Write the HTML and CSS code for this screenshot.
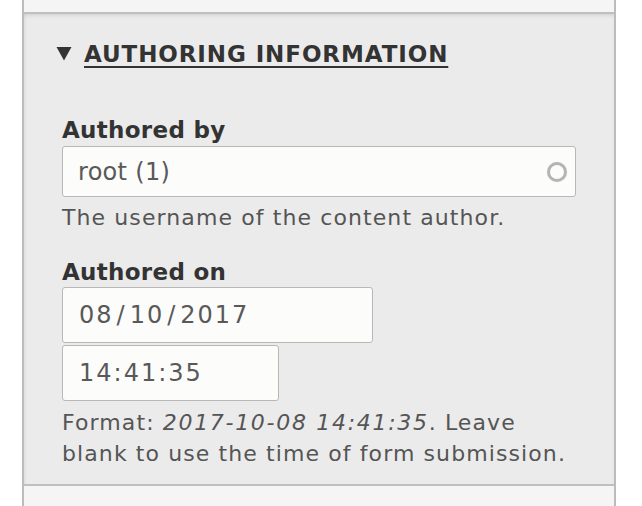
FILE: index.html
```html
<!DOCTYPE html>
<html>
<head>
<meta charset="utf-8">
<link rel="stylesheet" href="styles.css">
</head>
<body>
<div class="frame">
  <div class="prev"></div>
  <div class="details">
    <div class="summary">
      <svg class="arrow" width="16" height="15" viewBox="0 0 16 15"><polygon points="0.5,1 15.5,1 8,14.5" fill="#333"/></svg>
      <span class="summary-text">AUTHORING INFORMATION</span>
    </div>
    <div class="field">
      <div class="label">Authored by</div>
      <div class="input input-wide">
        <span>root (1)</span>
        <span class="throbber"></span>
      </div>
      <div class="desc">The username of the content author.</div>
    </div>
    <div class="field field-on">
      <div class="label">Authored on</div>
      <div class="input input-date"><span>08<span class="sep">/</span>10<span class="sep">/</span>2017</span></div>
      <div class="input input-time"><span>14:41:35</span></div>
      <div class="desc desc-format">Format: <em>2017-10-08 14:41:35</em>. Leave<br>blank to use the time of form submission.</div>
    </div>
  </div>
  <div class="next"></div>
</div>
</body>
</html>
```
FILE: styles.css
```css
html, body {
  margin: 0;
  padding: 0;
  background: #ffffff;
  height: 506px;
  overflow: hidden;
}
body {
  font-family: "DejaVu Sans", "Liberation Sans", sans-serif;
  color: #333;
}
.frame {
  margin-left: 22px;
  width: 590px;
  border-left: 2px solid #bcbcbc;
  border-right: 2px solid #bcbcbc;
}
.prev {
  height: 12px;
  background: #f5f5f5;
  border-bottom: 2px solid #bfbfbf;
}
.details {
  background: #ebebeb;
  box-shadow: inset 0 3px 4px -2px rgba(0,0,0,0.12), inset 3px 0 4px -3px rgba(0,0,0,0.08);
  padding: 25px 0 0 38px;
  height: 470px;
  box-sizing: border-box;
}
.summary {
  display: flex;
  align-items: center;
  height: 30px;
  line-height: 30px;
  font-size: 23px;
  font-weight: bold;
  color: #333;
}
.arrow {
  margin-left: -6px;
  margin-right: 12px;
  margin-top: -1px;
}
.summary-text {
  text-decoration: underline;
  text-underline-offset: 4px;
  text-decoration-thickness: 2px;
  letter-spacing: 0.9px;
}
.field {
  margin-top: 46px;
}
.field-on {
  margin-top: 24px;
}
.label {
  font-weight: bold;
  font-size: 23px;
  line-height: 30px;
  letter-spacing: 0.3px;
  color: #333;
}
.input {
  box-sizing: border-box;
  border: 1.5px solid #b8b8b8;
  border-radius: 3px;
  background: #fcfcfa;
  display: flex;
  align-items: center;
  padding-left: 15px;
  font-size: 24px;
  color: #595959;
}
.input-wide {
  margin-top: 1px;
  width: 514px;
  height: 51px;
  justify-content: space-between;
  padding-right: 8px;
  letter-spacing: 0.3px;
}
.throbber {
  width: 14px;
  height: 14px;
  border: 3px solid #b4b4b4;
  border-radius: 50%;
  box-shadow: 0 0 1px rgba(0,0,0,0.15);
}
.input-date {
  width: 311px;
  height: 56px;
  letter-spacing: 2px;
  padding-left: 16px;
}
.sep {
  margin: 0 3px;
}
.input-time {
  margin-top: 2px;
  width: 217px;
  height: 56px;
  letter-spacing: 2px;
  padding-left: 16px;
}
.desc {
  margin-top: 5px;
  font-size: 22px;
  line-height: 31px;
  letter-spacing: 1.1px;
  color: #555;
}
.desc-format {
  margin-top: 6px;
}
.desc em {
  font-style: italic;
  letter-spacing: 1.7px;
}
.next {
  height: 20px;
  background: #f5f5f5;
  border-top: 2px solid #bfbfbf;
}
```
